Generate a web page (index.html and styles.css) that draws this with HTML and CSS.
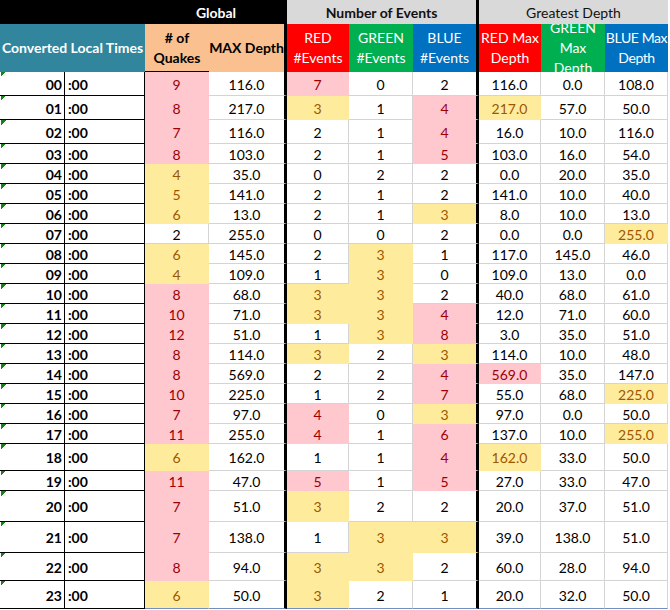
FILE: index.html
```html
<!DOCTYPE html>
<html>
<head>
<meta charset="utf-8">
<link rel="stylesheet" href="styles.css">
</head>
<body>
<div class="sheet">
  <div class="top blk span2"></div>
  <div class="top blk span2 bold">Global</div>
  <div class="top gray span3 bold thick">Number of Events</div>
  <div class="top gray span3">Greatest Depth</div>

  <div class="head teal span2 bold">Converted Local Times</div>
  <div class="head peach bold line-b">#&nbsp;of<br>Quakes</div>
  <div class="head peach bold thick">MAX Depth</div>
  <div class="head red">RED<br>#Events</div>
  <div class="head green">GREEN<br>#Events</div>
  <div class="head blue thick">BLUE<br>#Events</div>
  <div class="head red">RED Max<br>Depth</div>
  <div class="head green">GREEN<br>Max<br>Depth</div>
  <div class="head blue tight">BLUE Max<br>Depth</div>

  <div class="hr">00</div><div class="mn">:00</div><div class="d p">9</div><div class="d thick">116.0</div><div class="d p">7</div><div class="d">0</div><div class="d thick">2</div><div class="d">116.0</div><div class="d">0.0</div><div class="d">108.0</div>
  <div class="hr">01</div><div class="mn">:00</div><div class="d p">8</div><div class="d thick">217.0</div><div class="d y">3</div><div class="d">1</div><div class="d p thick">4</div><div class="d y">217.0</div><div class="d">57.0</div><div class="d">50.0</div>
  <div class="hr">02</div><div class="mn">:00</div><div class="d p">7</div><div class="d thick">116.0</div><div class="d">2</div><div class="d">1</div><div class="d p thick">4</div><div class="d">16.0</div><div class="d">10.0</div><div class="d">116.0</div>
  <div class="hr">03</div><div class="mn">:00</div><div class="d p">8</div><div class="d thick">103.0</div><div class="d">2</div><div class="d">1</div><div class="d p thick">5</div><div class="d">103.0</div><div class="d">16.0</div><div class="d">54.0</div>
  <div class="hr">04</div><div class="mn">:00</div><div class="d y">4</div><div class="d thick">35.0</div><div class="d">0</div><div class="d">2</div><div class="d thick">2</div><div class="d">0.0</div><div class="d">20.0</div><div class="d">35.0</div>
  <div class="hr">05</div><div class="mn">:00</div><div class="d y">5</div><div class="d thick">141.0</div><div class="d">2</div><div class="d">1</div><div class="d thick">2</div><div class="d">141.0</div><div class="d">10.0</div><div class="d">40.0</div>
  <div class="hr">06</div><div class="mn">:00</div><div class="d y">6</div><div class="d thick">13.0</div><div class="d">2</div><div class="d">1</div><div class="d y thick">3</div><div class="d">8.0</div><div class="d">10.0</div><div class="d">13.0</div>
  <div class="hr">07</div><div class="mn">:00</div><div class="d">2</div><div class="d thick">255.0</div><div class="d">0</div><div class="d">0</div><div class="d thick">2</div><div class="d">0.0</div><div class="d">0.0</div><div class="d y">255.0</div>
  <div class="hr">08</div><div class="mn">:00</div><div class="d y">6</div><div class="d thick">145.0</div><div class="d">2</div><div class="d y">3</div><div class="d thick">1</div><div class="d">117.0</div><div class="d">145.0</div><div class="d">46.0</div>
  <div class="hr">09</div><div class="mn">:00</div><div class="d y">4</div><div class="d thick">109.0</div><div class="d">1</div><div class="d y">3</div><div class="d thick">0</div><div class="d">109.0</div><div class="d">13.0</div><div class="d">0.0</div>
  <div class="hr">10</div><div class="mn">:00</div><div class="d p">8</div><div class="d thick">68.0</div><div class="d y">3</div><div class="d y">3</div><div class="d thick">2</div><div class="d">40.0</div><div class="d">68.0</div><div class="d">61.0</div>
  <div class="hr">11</div><div class="mn">:00</div><div class="d p">10</div><div class="d thick">71.0</div><div class="d y">3</div><div class="d y">3</div><div class="d p thick">4</div><div class="d">12.0</div><div class="d">71.0</div><div class="d">60.0</div>
  <div class="hr">12</div><div class="mn">:00</div><div class="d p">12</div><div class="d thick">51.0</div><div class="d">1</div><div class="d y">3</div><div class="d p thick">8</div><div class="d">3.0</div><div class="d">35.0</div><div class="d">51.0</div>
  <div class="hr">13</div><div class="mn">:00</div><div class="d p">8</div><div class="d thick">114.0</div><div class="d y">3</div><div class="d">2</div><div class="d y thick">3</div><div class="d">114.0</div><div class="d">10.0</div><div class="d">48.0</div>
  <div class="hr">14</div><div class="mn">:00</div><div class="d p">8</div><div class="d thick">569.0</div><div class="d">2</div><div class="d">2</div><div class="d p thick">4</div><div class="d p">569.0</div><div class="d">35.0</div><div class="d">147.0</div>
  <div class="hr">15</div><div class="mn">:00</div><div class="d p">10</div><div class="d thick">225.0</div><div class="d">1</div><div class="d">2</div><div class="d p thick">7</div><div class="d">55.0</div><div class="d">68.0</div><div class="d y">225.0</div>
  <div class="hr">16</div><div class="mn">:00</div><div class="d p">7</div><div class="d thick">97.0</div><div class="d p">4</div><div class="d">0</div><div class="d y thick">3</div><div class="d">97.0</div><div class="d">0.0</div><div class="d">50.0</div>
  <div class="hr">17</div><div class="mn">:00</div><div class="d p">11</div><div class="d thick">255.0</div><div class="d p">4</div><div class="d">1</div><div class="d p thick">6</div><div class="d">137.0</div><div class="d">10.0</div><div class="d y">255.0</div>
  <div class="hr">18</div><div class="mn">:00</div><div class="d y">6</div><div class="d thick">162.0</div><div class="d">1</div><div class="d">1</div><div class="d p thick">4</div><div class="d y">162.0</div><div class="d">33.0</div><div class="d">50.0</div>
  <div class="hr">19</div><div class="mn">:00</div><div class="d p">11</div><div class="d thick">47.0</div><div class="d p">5</div><div class="d">1</div><div class="d p thick">5</div><div class="d">27.0</div><div class="d">33.0</div><div class="d">47.0</div>
  <div class="hr">20</div><div class="mn">:00</div><div class="d p">7</div><div class="d thick">51.0</div><div class="d y">3</div><div class="d">2</div><div class="d thick">2</div><div class="d">20.0</div><div class="d">37.0</div><div class="d">51.0</div>
  <div class="hr">21</div><div class="mn">:00</div><div class="d p">7</div><div class="d thick">138.0</div><div class="d">1</div><div class="d y">3</div><div class="d y thick">3</div><div class="d">39.0</div><div class="d">138.0</div><div class="d">51.0</div>
  <div class="hr">22</div><div class="mn">:00</div><div class="d p">8</div><div class="d thick">94.0</div><div class="d y">3</div><div class="d y">3</div><div class="d thick">2</div><div class="d">60.0</div><div class="d">28.0</div><div class="d">94.0</div>
  <div class="hr">23</div><div class="mn">:00</div><div class="d y last">6</div><div class="d thick last">50.0</div><div class="d y last">3</div><div class="d last">2</div><div class="d thick last">1</div><div class="d last">20.0</div><div class="d last">32.0</div><div class="d last">50.0</div>
</div>
</body>
</html>
```

FILE: styles.css
```css
html, body {
  margin: 0;
  background: #ffffff;
}

body {
  font-family: Lato, "Open Sans", "Liberation Sans", sans-serif;
  font-size: 14px;
  color: #000000;
}

.sheet {
  display: grid;
  width: 668px;
  grid-template-columns: 65px 80px 64px 78px 62px 64px 66px 62px 64px 63px;
  grid-template-rows: 24px 48px 24px 24px 24px repeat(15, 20px) 27px 20px 31px 31px 28px 28px;
}

.sheet > div {
  box-sizing: border-box;
  display: flex;
  align-items: center;
  justify-content: center;
  overflow: hidden;
  white-space: nowrap;
  line-height: 20px;
}

.span2 { grid-column: span 2; }
.span3 { grid-column: span 3; }
.bold { font-weight: bold; }

.top { padding-top: 1px; }
.blk { background: #000000; color: #ffffff; }
.gray { background: #d9d9d9; color: #111111; }

.head {
  text-align: center;
  color: #ffffff;
}
.teal { background: #31859c; }
.peach { background: #fac090; color: #000000; }
.red { background: #ff0000; }
.green { background: #00b050; }
.blue { background: #0070c0; }
.tight { letter-spacing: -0.4px; }
.line-b { border-bottom: 1px solid #000000; }

.thick { border-right: 3px solid #000000 !important; }

.hr, .mn {
  font-weight: bold;
  border-right: 1px solid #000000;
  border-bottom: 1px solid #000000;
  padding-top: 2px;
}
.hr {
  justify-content: flex-end !important;
  padding-right: 2px;
  background-image: linear-gradient(135deg, #178217 50%, transparent 50%);
  background-size: 5px 5px;
  background-repeat: no-repeat;
  background-position: 1px 0;
}
.mn {
  justify-content: flex-start !important;
  padding-left: 3px;
}

.d {
  border-right: 1px solid #d4d4d4;
  border-bottom: 1px solid #d4d4d4;
  padding-top: 2px;
}
.p {
  background: #ffc7ce;
  color: #9c0006;
  border-color: #ffc7ce;
}
.y {
  background: #ffeb9c;
  color: #9c5700;
  border-color: #ffeb9c;
}
.last { border-bottom-color: #6f8fc0; }
```
